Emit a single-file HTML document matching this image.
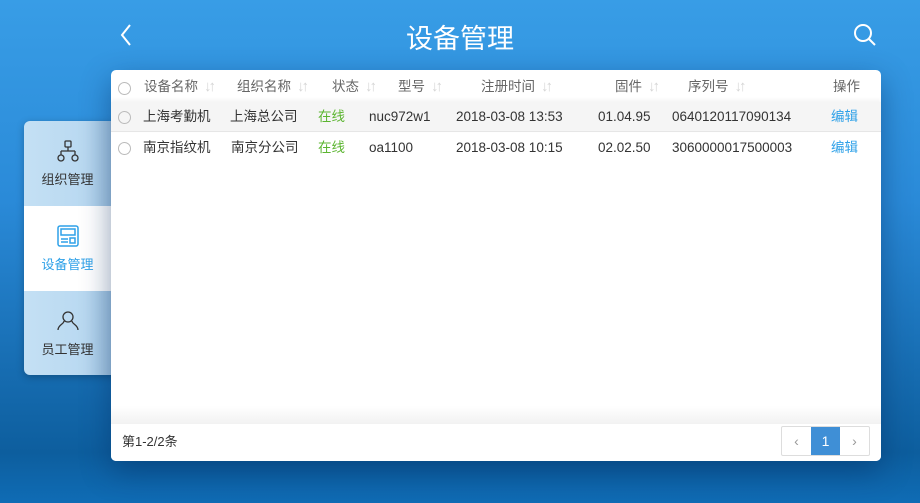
<!DOCTYPE html>
<html><head><meta charset="utf-8"><style>
*{margin:0;padding:0;box-sizing:border-box}
body{width:920px;height:503px;overflow:hidden;position:relative;font-family:"Liberation Sans","Noto Sans CJK SC",sans-serif;background:linear-gradient(180deg,#389de6 0%,#2a8ad8 40%,#0d5e9e 90%,#0f6cb5 100%)}
.title{position:absolute;top:17px;left:0;width:920px;text-align:center;color:#fff;font-size:27px}
.side{position:absolute;left:24px;top:121px;width:95px;height:254px;border-radius:6px;overflow:hidden;box-shadow:0 2px 8px rgba(0,0,0,.25)}
.it{height:85px;width:87px;background:linear-gradient(90deg,#c4e0f4 0%,#b9d9f1 70%,#a3c6e3 100%);text-align:center;font-size:13px;color:#333;padding-top:18px}
.it.on{background:#fff;color:#2ea1e8}
.it svg{display:block;margin:0 auto 6px}
.card{position:absolute;left:111px;top:70px;width:770px;height:391px;background:#fff;border-radius:5px;box-shadow:0 10px 30px rgba(0,40,90,.45);overflow:hidden}
.row{position:absolute;left:0;width:770px;height:30px;font-size:13.5px;color:#333;line-height:30px}
.row span{position:absolute;white-space:nowrap}
.hd{top:2px;color:#666}
.r1{top:32px;background:#f5f5f5;border-bottom:1px solid #e6e6e6;box-shadow:0 -2px 4px rgba(0,0,0,.05)}
.r2{top:63px}
.rad{position:absolute;left:7px;top:9px;width:13px;height:13px;border:1px solid #bbb;border-radius:50%}
.s{color:#d5d5d5;font-size:15px;font-weight:normal;margin-left:6px;letter-spacing:-3px}
.g{color:#5cb531}.b{color:#2ea1e8}
.foot{position:absolute;left:0;top:354px;width:770px;height:37px;background:#fff}
.fade{position:absolute;left:0;top:336px;width:770px;height:18px;background:linear-gradient(#fff,#f2f2f2)}
.pg{position:absolute;right:11px;top:2px;height:30px;display:flex;border:1px solid #ddd;border-radius:2px}
.pg div{width:29px;text-align:center;line-height:28px;color:#999;font-size:14px}
.pg .a{background:#3f8fd6;color:#fff}
</style></head><body>
<svg style="position:absolute;left:118px;top:23px" width="16" height="24"><path d="M12 2L4 12l8 10" stroke="#fff" stroke-width="2" fill="none"/></svg>
<div class="title">设备管理</div>
<svg style="position:absolute;left:852px;top:22px" width="26" height="26"><circle cx="11" cy="11" r="8" stroke="#fff" stroke-width="2" fill="none"/><path d="M17 17l6 6" stroke="#fff" stroke-width="2"/></svg>
<div class="side">
<div class="it"><svg width="24" height="24" fill="none" stroke="#333" stroke-width="1.3"><rect x="9" y="2" width="6" height="6" rx="1"/><path d="M12 8v4M5 12h14M5 12v4M19 12v4"/><circle cx="5" cy="19" r="3"/><circle cx="19" cy="19" r="3"/></svg>组织管理</div>
<div class="it on"><svg width="24" height="24" fill="none" stroke="#2ea1e8" stroke-width="1.5"><rect x="2" y="2" width="20" height="20" rx="2"/><rect x="5" y="5" width="14" height="6"/><path d="M5 15h7M5 18h7"/><rect x="14" y="14" width="5" height="5"/></svg>设备管理</div>
<div class="it"><svg width="24" height="24" fill="none" stroke="#333" stroke-width="1.3"><circle cx="12" cy="8" r="5"/><path d="M8 12c0 3-6 4-6 9M16 12c0 3 6 4 6 9"/></svg>员工管理</div>
</div>
<div class="card">
<div class="row hd"><i class="rad" style="top:10px"></i>
<span style="left:33px">设备名称<b class="s">↓↑</b></span>
<span style="left:126px">组织名称<b class="s">↓↑</b></span>
<span style="left:221px">状态<b class="s">↓↑</b></span>
<span style="left:287px">型号<b class="s">↓↑</b></span>
<span style="left:370px">注册时间<b class="s">↓↑</b></span>
<span style="left:504px">固件<b class="s">↓↑</b></span>
<span style="left:577px">序列号<b class="s">↓↑</b></span>
<span style="left:722px">操作</span></div>
<div class="row r1"><i class="rad"></i><span style="left:32px">上海考勤机</span><span style="left:119px">上海总公司</span><span class="g" style="left:207px">在线</span><span style="left:258px">nuc972w1</span><span style="left:345px">2018-03-08 13:53</span><span style="left:487px">01.04.95</span><span style="left:561px">0640120117090134</span><span class="b" style="left:720px">编辑</span></div>
<div class="row r2"><i class="rad"></i><span style="left:32px">南京指纹机</span><span style="left:120px">南京分公司</span><span class="g" style="left:207px">在线</span><span style="left:258px">oa1100</span><span style="left:345px">2018-03-08 10:15</span><span style="left:487px">02.02.50</span><span style="left:561px">3060000017500003</span><span class="b" style="left:720px">编辑</span></div>
<div class="fade"></div>
<div class="foot"><span style="position:absolute;left:11px;top:7px;font-size:13px;color:#333">第1-2/2条</span>
<div class="pg"><div>‹</div><div class="a">1</div><div>›</div></div></div>
</div>
</body></html>
